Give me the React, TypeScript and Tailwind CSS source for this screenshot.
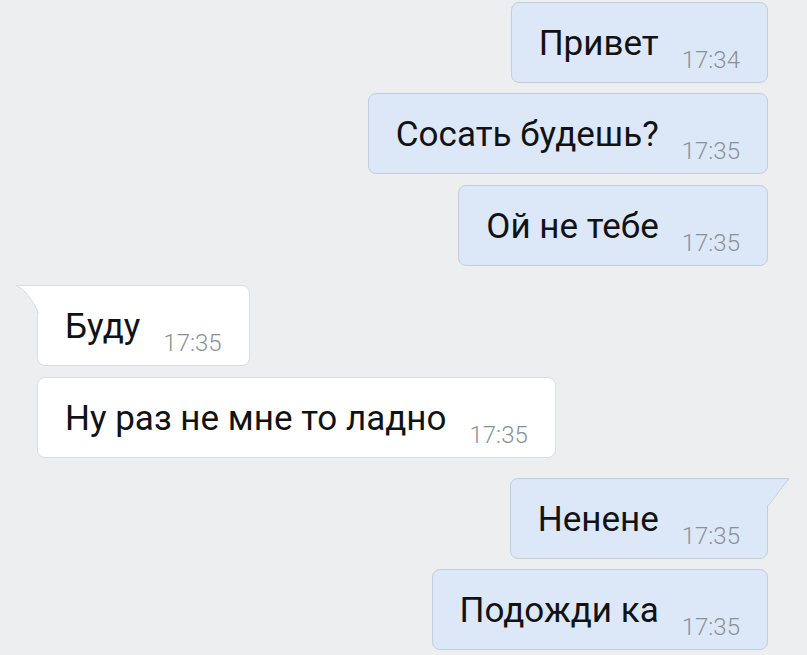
import React from "react"

type Msg = { text: string; time: string; out: boolean; tail?: boolean; gap: string }

const messages: Msg[] = [
  { text: "Привет", time: "17:34", out: true, gap: "mt-[2px]" },
  { text: "Сосать будешь?", time: "17:35", out: true, gap: "mt-[10px]" },
  { text: "Ой не тебе", time: "17:35", out: true, gap: "mt-[11px]" },
  { text: "Буду", time: "17:35", out: false, tail: true, gap: "mt-[19px]" },
  { text: "Ну раз не мне то ладно", time: "17:35", out: false, gap: "mt-[11px]" },
  { text: "Ненене", time: "17:35", out: true, tail: true, gap: "mt-[20px]" },
  { text: "Подожди ка", time: "17:35", out: true, gap: "mt-[10px]" },
]

const Tail = ({ out }: { out: boolean }) => {
  if (out) {
    return (
      <svg className="absolute -top-px -right-[24px]" width="27" height="30" viewBox="0 0 27 30">
        <path d="M0 0 L25 0 L3 28 L0 28 Z" fill="#dce8f8" />
        <path d="M0 0.5 L25 0.5 L3.5 28.5" fill="none" stroke="#c3cedd" strokeWidth="1" />
      </svg>
    )
  }
  return (
    <svg className="absolute -top-px -left-[24px]" width="27" height="30" viewBox="0 0 27 30">
      <path d="M27 0 L2 0 Q15 6 25 28 L27 28 Z" fill="#ffffff" />
      <path d="M27 0.5 L2 0.5 Q15 6 24.5 28.5" fill="none" stroke="#d9dde2" strokeWidth="1" />
    </svg>
  )
}

const Bubble = ({ m }: { m: Msg }) => {
  const base = m.out
    ? "bg-[#dce8f8] border-[#c3cedd]"
    : "bg-white border-[#d9dde2]"
  const corner = m.tail ? (m.out ? "rounded-tr-none" : "rounded-tl-none") : ""
  return (
    <div className={"flex " + (m.out ? "justify-end pr-[39px]" : "justify-start pl-[37px]") + " " + m.gap}>
      <div className={"relative h-[81px] flex items-center border rounded-lg pl-[27px] pr-[27px] " + base + " " + corner}>
        {m.tail && <Tail out={m.out} />}
        <span className="text-[35px] leading-none text-[#111214] translate-y-[1px]">{m.text}</span>
        <span className="ml-[23px] text-[24px] font-light leading-none text-[#8a9097] translate-y-[17px]">{m.time}</span>
      </div>
    </div>
  )
}

export default function App() {
  return (
    <div className="w-[807px] h-[655px] overflow-hidden bg-[#edeef0] font-['Roboto',sans-serif]">
      {messages.map((m, i) => (
        <Bubble key={i} m={m} />
      ))}
    </div>
  )
}
